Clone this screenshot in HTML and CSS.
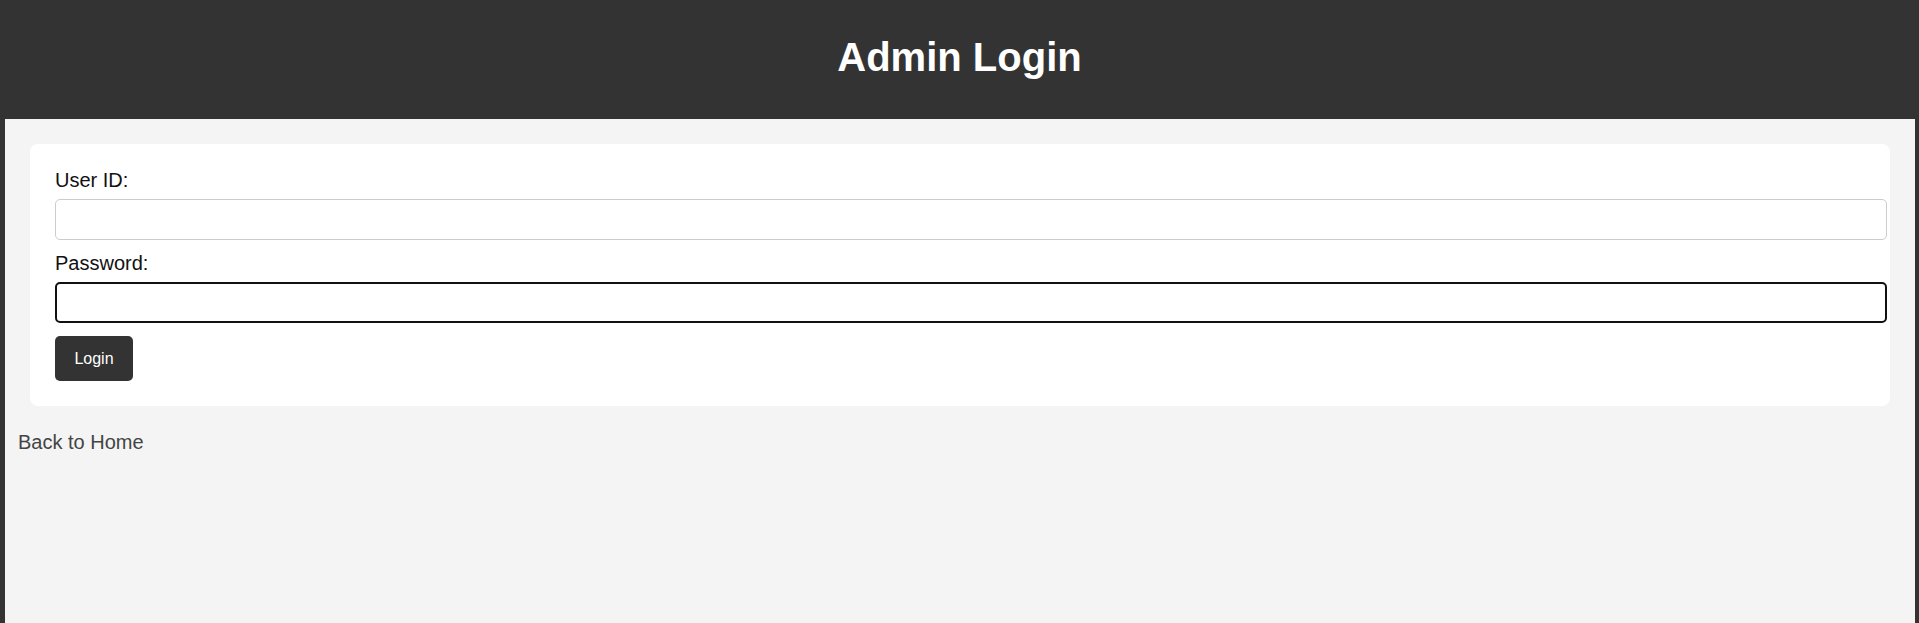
FILE: index.html
```html
<!DOCTYPE html>
<html lang="en">
<head>
<meta charset="utf-8">
<title>Admin Login</title>
<link rel="stylesheet" href="styles.css">
</head>
<body>
<div class="page">
  <header class="site-header">
    <h1 class="site-title">Admin Login</h1>
  </header>
  <main class="content">
    <form class="login-card">
      <label class="field-label" for="userid">User ID:</label>
      <input class="field-input" type="text" id="userid" name="userid">
      <label class="field-label" for="password">Password:</label>
      <input class="field-input is-focused" type="password" id="password" name="password">
      <button class="login-button" type="button">Login</button>
    </form>
    <a class="back-link" href="#">Back to Home</a>
  </main>
</div>
</body>
</html>
```
FILE: styles.css
```css
html, body {
  margin: 0;
  padding: 0;
  height: 100%;
  background: #333333;
  font-family: "Liberation Sans", Arial, sans-serif;
}

.page {
  display: flex;
  flex-direction: column;
  min-height: 100%;
}

.site-header {
  box-sizing: border-box;
  height: 119px;
  padding-top: 34px;
  background: #333333;
  text-align: center;
}

.site-title {
  margin: 0;
  font-size: 40px;
  line-height: 46px;
  font-weight: bold;
  color: #ffffff;
}

.content {
  flex: 1;
  margin: 0 4px 0 5px;
  padding-top: 25px;
  background: #f4f4f4;
}

.login-card {
  display: flex;
  flex-direction: column;
  align-items: flex-start;
  margin: 0 25px;
  padding: 25px;
  background: #ffffff;
  border-radius: 8px;
}

.field-label {
  display: block;
  font-size: 20px;
  line-height: 23px;
  color: #111111;
  margin-bottom: 7px;
}

.field-input {
  box-sizing: border-box;
  width: calc(100% + 22px);
  height: 41px;
  margin: 0 0 12px;
  padding: 0 12px;
  border: 1px solid #cccccc;
  border-radius: 5px;
  background: #ffffff;
  font-family: "Liberation Sans", Arial, sans-serif;
  font-size: 16px;
  outline: none;
}

.field-input.is-focused {
  border: 2.5px solid #111111;
  margin-bottom: 13px;
}

.login-button {
  box-sizing: border-box;
  width: 78px;
  height: 45px;
  padding: 0;
  border: none;
  border-radius: 5px;
  background: #333333;
  color: #ffffff;
  font-family: "Liberation Sans", Arial, sans-serif;
  font-size: 16px;
  cursor: pointer;
}

.back-link {
  display: inline-block;
  margin: 25px 0 0 13px;
  font-size: 20px;
  line-height: 23px;
  color: #444444;
  text-decoration: none;
}
```
